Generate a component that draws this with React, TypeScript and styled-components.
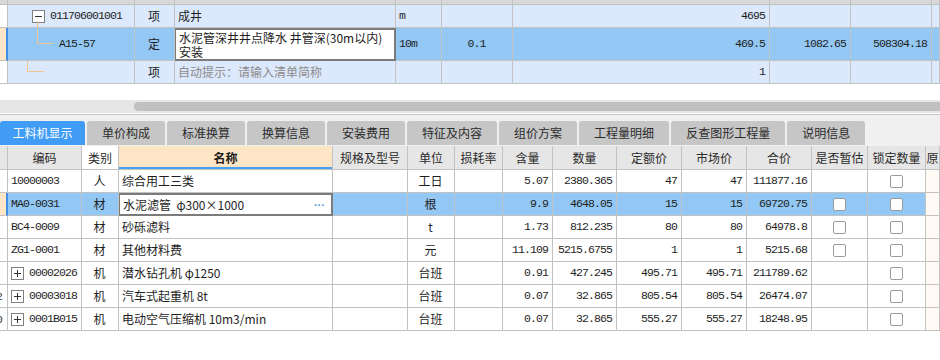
import styled, { createGlobalStyle, css } from 'styled-components';

const GlobalStyle = createGlobalStyle`
  html, body {
    margin: 0;
    padding: 0;
    background: #ffffff;
  }
  body {
    font-family: "Noto Sans CJK SC", "Noto Sans", sans-serif;
    color: #1e1e1e;
  }
`;

const LINE = '#c2c2c2';
const LIGHT_BLUE = '#dce8fb';
const SELECTED = '#93c7f4';
const ORANGE = '#fde5c6';
const CREAM = '#fffaf3';

const TOP_COLS = '8px 127px 40px 221px 46px 71px 257px 81px 81px 8px';
const LOW_COLS = '8px 74px 37px 214px 75px 47px 48px 50px 64px 65px 65px 65px 56px 58px 14px';

type Align = 'left' | 'center' | 'right';

const mono = css`
  font-family: "Liberation Mono", "Noto Sans CJK SC", monospace;
  font-size: 11.5px;
  letter-spacing: -0.9px;
`;

const Page = styled.div`
  width: 940px;
  height: 360px;
  overflow: hidden;
  display: flex;
  flex-direction: column;
  background: #ffffff;
`;

/* ---------- top grid ---------- */

const TopRow = styled.div<{ $h: number; $bg: string }>`
  display: grid;
  grid-template-columns: ${TOP_COLS};
  height: ${(p) => p.$h}px;
  background: ${(p) => p.$bg};
`;

const Cell = styled.div<{ $align?: Align; $mono?: boolean; $bg?: string; $pl?: number }>`
  box-sizing: border-box;
  position: relative;
  display: flex;
  align-items: center;
  justify-content: ${(p) =>
    p.$align === 'right' ? 'flex-end' : p.$align === 'center' ? 'center' : 'flex-start'};
  padding: 0 4px 0 ${(p) => p.$pl ?? 3}px;
  border-right: 1px solid ${LINE};
  border-bottom: 1px solid ${LINE};
  background: ${(p) => p.$bg ?? 'transparent'};
  font-size: 12px;
  line-height: 14px;
  white-space: nowrap;
  overflow: hidden;
  ${(p) => p.$mono && mono}
`;

const Gutter = styled.div<{ $selected?: boolean }>`
  box-sizing: border-box;
  display: flex;
  align-items: center;
  overflow: hidden;
  border-bottom: 1px solid ${LINE};
  border-right: ${(p) => (p.$selected ? '2px solid #3d8fe8' : `1px solid ${LINE}`)};
  background: ${(p) => (p.$selected ? ORANGE : '#ffffff')};
  ${mono}
  color: #333;
`;

const GutterText = styled.span`
  margin-left: -4px;
`;

const Editor = styled.div`
  box-sizing: border-box;
  display: flex;
  align-items: center;
  justify-content: space-between;
  padding: 0 5px 0 3px;
  margin-left: -1px;
  border: 2px solid #7b7b7b;
  background: #ffffff;
  font-size: 12px;
  line-height: 14px;
  overflow: hidden;
  white-space: pre-wrap;
`;

const Dots = styled.span`
  color: #4f94de;
  font-family: "Liberation Mono", monospace;
  font-size: 11px;
  font-weight: bold;
  letter-spacing: -3px;
  margin-right: 3px;
`;

const Placeholder = styled.span`
  color: #8c8c8c;
`;

const TreeLine = styled.span<{ $x: number; $y: number; $w: number; $h: number }>`
  position: absolute;
  left: ${(p) => p.$x}px;
  top: ${(p) => p.$y}px;
  width: ${(p) => p.$w}px;
  height: ${(p) => p.$h}px;
  background: #f1c68e;
`;

const CodeText = styled.span`
  ${mono}
`;

const ExpandWrap = styled.span`
  display: inline-flex;
  margin-right: 5px;
`;

function ExpandBox({ plus }: { plus?: boolean }) {
  return (
    <ExpandWrap>
      <svg width="13" height="13" viewBox="0 0 13 13">
        <rect x="0.5" y="0.5" width="12" height="12" fill="#ffffff" stroke="#808080" />
        <line x1="3" y1="6.5" x2="10" y2="6.5" stroke="#333" />
        {plus && <line x1="6.5" y1="3" x2="6.5" y2="10" stroke="#333" />}
      </svg>
    </ExpandWrap>
  );
}

/* ---------- scrollbar + tabs ---------- */

const Spacer = styled.div`
  height: 16px;
`;

const ScrollTrack = styled.div`
  height: 13px;
  background: #e6e6e6;
  display: flex;
  align-items: center;
`;

const ScrollThumb = styled.div`
  flex: 1;
  height: 9px;
  margin-left: 134px;
  border-radius: 5px 0 0 5px;
  background: #c0c0c0;
`;

const TabStrip = styled.div`
  margin-top: 1px;
  border-top: 1px solid #c6c6c6;
  background: #f0f0f0;
  padding: 6px 0 1px 0;
  display: flex;
  gap: 2px;
  align-items: flex-end;
`;

const Tab = styled.div<{ $active?: boolean }>`
  height: 24px;
  line-height: 24px;
  padding: 0 ${(p) => (p.$active ? 12.5 : 15)}px;
  border-radius: 3px 3px 0 0;
  font-size: 12px;
  color: ${(p) => (p.$active ? '#ffffff' : '#2b2b2b')};
  background: ${(p) => (p.$active ? '#409cf5' : '#c6c6c6')};
  white-space: nowrap;
`;

/* ---------- lower grid ---------- */

const LowRow = styled.div<{ $bg: string; $h?: number }>`
  display: grid;
  grid-template-columns: ${LOW_COLS};
  height: ${(p) => p.$h ?? 23}px;
  background: ${(p) => p.$bg};
`;

const HeadCell = styled.div<{ $bg?: string; $strong?: boolean }>`
  box-sizing: border-box;
  display: flex;
  align-items: center;
  justify-content: center;
  overflow: hidden;
  white-space: nowrap;
  border-right: 1px solid ${LINE};
  border-bottom: 1px solid ${LINE};
  background: ${(p) => p.$bg ?? '#e6e6e6'};
  font-size: 12px;
  color: #2b2b2b;
  ${(p) =>
    p.$strong &&
    css`
      font-weight: bold;
      color: #1a1a1a;
      box-shadow: inset 0 -2px 0 #4aa0f0;
    `}
`;

const Check = styled.span`
  box-sizing: border-box;
  width: 13px;
  height: 13px;
  border: 1px solid #9b9b9b;
  border-radius: 2px;
  background: #ffffff;
`;

type Item = {
  gutter?: string;
  expand?: boolean;
  code: string;
  type: string;
  name: string;
  unit: string;
  qty: string;
  amount: string;
  quota: string;
  market: string;
  total: string;
  est?: boolean;
  selected?: boolean;
};

const items: Item[] = [
  { code: '10000003', type: '人', name: '综合用工三类', unit: '工日', qty: '5.07', amount: '2380.365', quota: '47', market: '47', total: '111877.16' },
  { code: 'MA0-0031', type: '材', name: '水泥滤管  φ300×1000', unit: '根', qty: '9.9', amount: '4648.05', quota: '15', market: '15', total: '69720.75', est: true, selected: true },
  { code: 'BC4-0009', type: '材', name: '砂砾滤料', unit: 't', qty: '1.73', amount: '812.235', quota: '80', market: '80', total: '64978.8', est: true },
  { code: 'ZG1-0001', type: '材', name: '其他材料费', unit: '元', qty: '11.109', amount: '5215.6755', quota: '1', market: '1', total: '5215.68', est: true },
  { expand: true, code: '00002026', type: '机', name: '潜水钻孔机  φ1250', unit: '台班', qty: '0.91', amount: '427.245', quota: '495.71', market: '495.71', total: '211789.62' },
  { gutter: '2', expand: true, code: '00003018', type: '机', name: '汽车式起重机 8t', unit: '台班', qty: '0.07', amount: '32.865', quota: '805.54', market: '805.54', total: '26474.07' },
  { gutter: '0', expand: true, code: '0001B015', type: '机', name: '电动空气压缩机 10m3/min', unit: '台班', qty: '0.07', amount: '32.865', quota: '555.27', market: '555.27', total: '18248.95' },
];

const headers = ['编码', '类别', '名称', '规格及型号', '单位', '损耗率', '含量', '数量', '定额价', '市场价', '合价', '是否暂估', '锁定数量', '原'];

const tabs = ['工料机显示', '单价构成', '标准换算', '换算信息', '安装费用', '特征及内容', '组价方案', '工程量明细', '反查图形工程量', '说明信息'];

function App() {
  return (
    <Page>
      <GlobalStyle />

      <TopRow $h={5} $bg="#d8d8d8">
        {Array.from({ length: 10 }).map((_, i) => (
          <Cell key={i} />
        ))}
      </TopRow>

      <TopRow $h={23} $bg={LIGHT_BLUE}>
        <Gutter />
        <Cell $pl={24}>
          <ExpandBox />
          <CodeText>011706001001</CodeText>
          <TreeLine $x={29} $y={16} $w={1} $h={7} />
        </Cell>
        <Cell $align="center">项</Cell>
        <Cell>成井</Cell>
        <Cell $mono>m</Cell>
        <Cell />
        <Cell $align="right" $mono>4695</Cell>
        <Cell />
        <Cell />
        <Cell />
      </TopRow>

      <TopRow $h={33} $bg={SELECTED}>
        <Gutter $selected />
        <Cell $pl={51}>
          <TreeLine $x={29} $y={0} $w={1} $h={15} />
          <TreeLine $x={29} $y={15} $w={16} $h={1} />
          <CodeText>A15-57</CodeText>
        </Cell>
        <Cell $align="center">定</Cell>
        <Editor>{'水泥管深井井点降水 井管深(30m以内)\n安装'}</Editor>
        <Cell $mono>10m</Cell>
        <Cell $align="center" $mono>0.1</Cell>
        <Cell $align="right" $mono>469.5</Cell>
        <Cell $align="right" $mono>1082.65</Cell>
        <Cell $align="right" $mono>508304.18</Cell>
        <Cell />
      </TopRow>

      <TopRow $h={23} $bg={LIGHT_BLUE}>
        <Gutter />
        <Cell>
          <TreeLine $x={19} $y={0} $w={1} $h={10} />
          <TreeLine $x={19} $y={10} $w={17} $h={1} />
        </Cell>
        <Cell $align="center">项</Cell>
        <Cell>
          <Placeholder>自动提示：请输入清单简称</Placeholder>
        </Cell>
        <Cell />
        <Cell />
        <Cell $align="right" $mono>1</Cell>
        <Cell />
        <Cell />
        <Cell />
      </TopRow>

      <Spacer />
      <ScrollTrack>
        <ScrollThumb />
      </ScrollTrack>

      <TabStrip>
        {tabs.map((t, i) => (
          <Tab key={t} $active={i === 0}>
            {t}
          </Tab>
        ))}
      </TabStrip>

      <LowRow $bg="#e6e6e6" $h={24}>
        <HeadCell />
        {headers.map((h) => (
          <HeadCell
            key={h}
            $bg={h === '类别' ? '#ffffff' : h === '名称' ? ORANGE : undefined}
            $strong={h === '名称'}
          >
            {h}
          </HeadCell>
        ))}
      </LowRow>

      {items.map((it) => (
        <LowRow key={it.code} $bg={it.selected ? SELECTED : '#ffffff'}>
          <Gutter $selected={it.selected}>
            {it.gutter && <GutterText>{it.gutter}</GutterText>}
          </Gutter>
          <Cell>
            {it.expand && <ExpandBox plus />}
            <CodeText>{it.code}</CodeText>
          </Cell>
          <Cell $align="center">{it.type}</Cell>
          {it.selected ? (
            <Editor>
              <span>{it.name}</span>
              <Dots>···</Dots>
            </Editor>
          ) : (
            <Cell>{it.name}</Cell>
          )}
          <Cell />
          <Cell $align="center">{it.unit}</Cell>
          <Cell />
          <Cell $align="right" $mono>{it.qty}</Cell>
          <Cell $align="right" $mono>{it.amount}</Cell>
          <Cell $align="right" $mono>{it.quota}</Cell>
          <Cell $align="right" $mono>{it.market}</Cell>
          <Cell $align="right" $mono>{it.total}</Cell>
          <Cell $align="center">{it.est && <Check />}</Cell>
          <Cell $align="center">
            <Check />
          </Cell>
          <Cell $bg={CREAM} />
        </LowRow>
      ))}
    </Page>
  );
}

export default App;
